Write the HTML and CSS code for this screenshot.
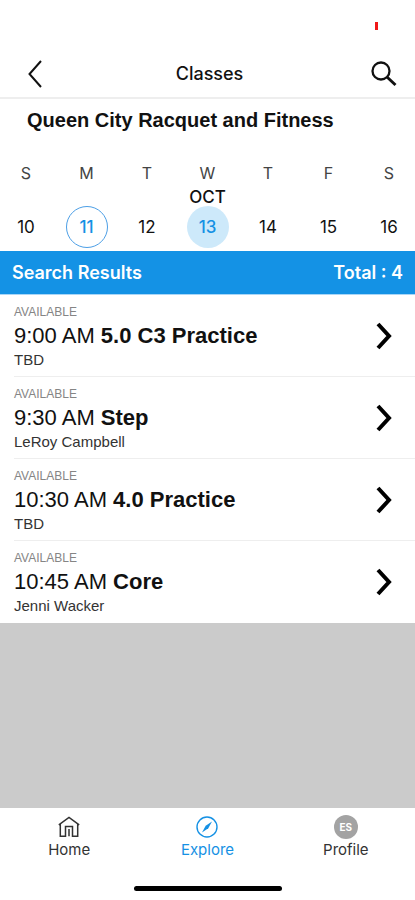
FILE: index.html
```html
<!DOCTYPE html>
<html lang="en">
<head>
<meta charset="utf-8">
<meta name="viewport" content="width=device-width, initial-scale=1">
<title>Classes</title>
<link rel="stylesheet" href="styles.css">
</head>
<body>
<div class="status"><span class="recording"></span></div>
<header class="topbar">
  <button class="icon-button" aria-label="Back"><svg width="14" height="28" viewBox="0 0 14 28"><path d="M13 1 1.5 14 13 27" fill="none" stroke="currentColor" stroke-width="2"/></svg></button>
  <h1 class="topbar-title">Classes</h1>
  <button class="icon-button" aria-label="Search"><svg width="26" height="26" viewBox="0 0 26 26" fill="none" stroke="currentColor"><circle cx="10" cy="10" r="8.5" stroke-width="2.3"/><path d="M16 16 24.5 24" stroke-width="3"/></svg></button>
</header>
<main class="content">
  <h2 class="club">Queen City Racquet and Fitness</h2>
  <div class="week">
    <div class="day"><span class="weekday">S</span><span class="month"></span><button class="date">10</button></div>
    <div class="day"><span class="weekday">M</span><span class="month"></span><button class="date today">11</button></div>
    <div class="day"><span class="weekday">T</span><span class="month"></span><button class="date">12</button></div>
    <div class="day"><span class="weekday">W</span><span class="month">OCT</span><button class="date selected">13</button></div>
    <div class="day"><span class="weekday">T</span><span class="month"></span><button class="date">14</button></div>
    <div class="day"><span class="weekday">F</span><span class="month"></span><button class="date">15</button></div>
    <div class="day"><span class="weekday">S</span><span class="month"></span><button class="date">16</button></div>
  </div>
  <div class="results-bar"><span>Search Results</span><span>Total : 4</span></div>
  <ul class="results">
    <li><a class="result" href="#"><span class="info"><span class="state">AVAILABLE</span><span class="session">9:00 AM <b>5.0 C3 Practice</b></span><span class="coach">TBD</span></span><svg class="chevron" width="16" height="28" viewBox="0 0 16 28"><path d="M2 2 13 14 2 26"/></svg></a></li>
    <li><a class="result" href="#"><span class="info"><span class="state">AVAILABLE</span><span class="session">9:30 AM <b>Step</b></span><span class="coach">LeRoy Campbell</span></span><svg class="chevron" width="16" height="28" viewBox="0 0 16 28"><path d="M2 2 13 14 2 26"/></svg></a></li>
    <li><a class="result" href="#"><span class="info"><span class="state">AVAILABLE</span><span class="session">10:30 AM <b>4.0 Practice</b></span><span class="coach">TBD</span></span><svg class="chevron" width="16" height="28" viewBox="0 0 16 28"><path d="M2 2 13 14 2 26"/></svg></a></li>
    <li><a class="result" href="#"><span class="info"><span class="state">AVAILABLE</span><span class="session">10:45 AM <b>Core</b></span><span class="coach">Jenni Wacker</span></span><svg class="chevron" width="16" height="28" viewBox="0 0 16 28"><path d="M2 2 13 14 2 26"/></svg></a></li>
  </ul>
</main>
<footer class="footer">
  <nav class="tabs">
    <a class="tab" href="#"><span class="tab-icon"><svg width="22" height="22" viewBox="0 0 22 22" fill="none" stroke="currentColor" stroke-width="1.5"><path d="M.8 8.8 11 1.4 21.2 8.8M2.3 8v12.2h5.2V10.5h7v9.7h5.2V8M11 13v7.2"/></svg></span>Home</a>
    <a class="tab active" href="#"><span class="tab-icon"><svg width="22" height="22" viewBox="0 0 22 22"><circle cx="11" cy="11" r="10" fill="none" stroke="currentColor" stroke-width="1.4"/><path d="M16 5.5 12.3 12.3 6 16.5 9.7 9.7Z" fill="currentColor"/></svg></span>Explore</a>
    <a class="tab" href="#"><span class="tab-icon"><span class="avatar">ES</span></span>Profile</a>
  </nav>
  <div class="home-indicator"></div>
</footer>
</body>
</html>
```
FILE: styles.css
```css
* {
  box-sizing: border-box;
}

body {
  margin: 0;
  min-height: 100vh;
  display: flex;
  flex-direction: column;
  background: #fff;
  color: #111;
  font-family: "Liberation Sans", Arial, sans-serif;
}

button {
  padding: 0;
  border: 0;
  background: none;
  color: inherit;
  font: inherit;
}

a {
  color: inherit;
  text-decoration: none;
}

svg {
  display: block;
}

.status {
  height: 50px;
  display: flex;
  justify-content: flex-end;
  padding: 22px 37px 0;
}

.recording {
  width: 3px;
  height: 8px;
  background: #f01818;
}

.topbar {
  height: 49px;
  display: grid;
  grid-template-columns: 38px 1fr 38px;
  align-items: center;
  padding: 0 12px 0 16px;
  border-bottom: 2px solid #eee;
}

.icon-button {
  width: 38px;
  height: 38px;
  display: grid;
  place-items: center;
}

.topbar-title {
  margin: 0;
  font: 500 18px/24px Inter, sans-serif;
  text-align: center;
}

.content {
  flex: 1;
  display: flex;
  flex-direction: column;
  background: #cbcbcb;
}

.club {
  margin: 0;
  padding: 8px 27px 28px;
  background: #fff;
  font-size: 20px;
  font-weight: 700;
  line-height: 26px;
}

.week {
  display: flex;
  justify-content: space-between;
  padding: 0 5px 3px;
  background: #fff;
  font-family: Inter, sans-serif;
}

.day {
  width: 42px;
  display: flex;
  flex-direction: column;
  align-items: center;
}

.weekday {
  font-size: 16px;
  line-height: 24px;
  color: #444;
}

.month {
  height: 21px;
  font-size: 17px;
  font-weight: 500;
  line-height: 24px;
}

.date {
  width: 42px;
  height: 42px;
  border-radius: 50%;
  font-size: 17px;
  font-weight: 400;
}

.today {
  border: 1px solid #4d9fe6;
  color: #1591e4;
  font-weight: 500;
}

.selected {
  background: #cde9fa;
  color: #1591e4;
  font-weight: 500;
}

.results-bar {
  height: 44px;
  display: flex;
  align-items: center;
  justify-content: space-between;
  padding: 0 12px;
  border-bottom: 1px solid #a9d6f7;
  background: #1492e5;
  background-clip: padding-box;
  color: #fff;
  font: 600 18px/24px Inter, sans-serif;
}

.results {
  margin: 0;
  padding: 0 0 0 14px;
  background: #fff;
  list-style: none;
}

.result {
  height: 82px;
  display: flex;
  align-items: center;
  justify-content: space-between;
  padding: 1px 23px 0 0;
  border-bottom: 1px solid #eee;
}

.results li:last-child .result {
  border-bottom-color: transparent;
}

.info {
  display: flex;
  flex-direction: column;
}

.state {
  font-size: 12px;
  line-height: 16px;
  color: #858585;
}

.session {
  font-size: 22px;
  line-height: 32px;
}

.coach {
  font-size: 15px;
  line-height: 16px;
  color: #333;
}

.chevron {
  fill: none;
  stroke: #000;
  stroke-width: 4;
}

.footer {
  height: 92px;
  display: flex;
  flex-direction: column;
  align-items: center;
  justify-content: space-between;
  padding: 6px 0 9px;
  background: #fff;
}

.tabs {
  width: 100%;
  display: flex;
}

.tab {
  flex: 1;
  display: flex;
  flex-direction: column;
  align-items: center;
  font: 400 15px/20px Inter, sans-serif;
  color: #333;
}

.active {
  color: #1591e4;
}

.tab-icon {
  height: 26px;
  display: grid;
  place-items: center;
}

.avatar {
  width: 24px;
  border-radius: 50%;
  background: #a3a3a3;
  color: #fff;
  font-size: 10px;
  font-weight: 700;
  line-height: 24px;
  text-align: center;
}

.home-indicator {
  width: 148px;
  height: 5px;
  border-radius: 3px;
  background: #000;
}
```
